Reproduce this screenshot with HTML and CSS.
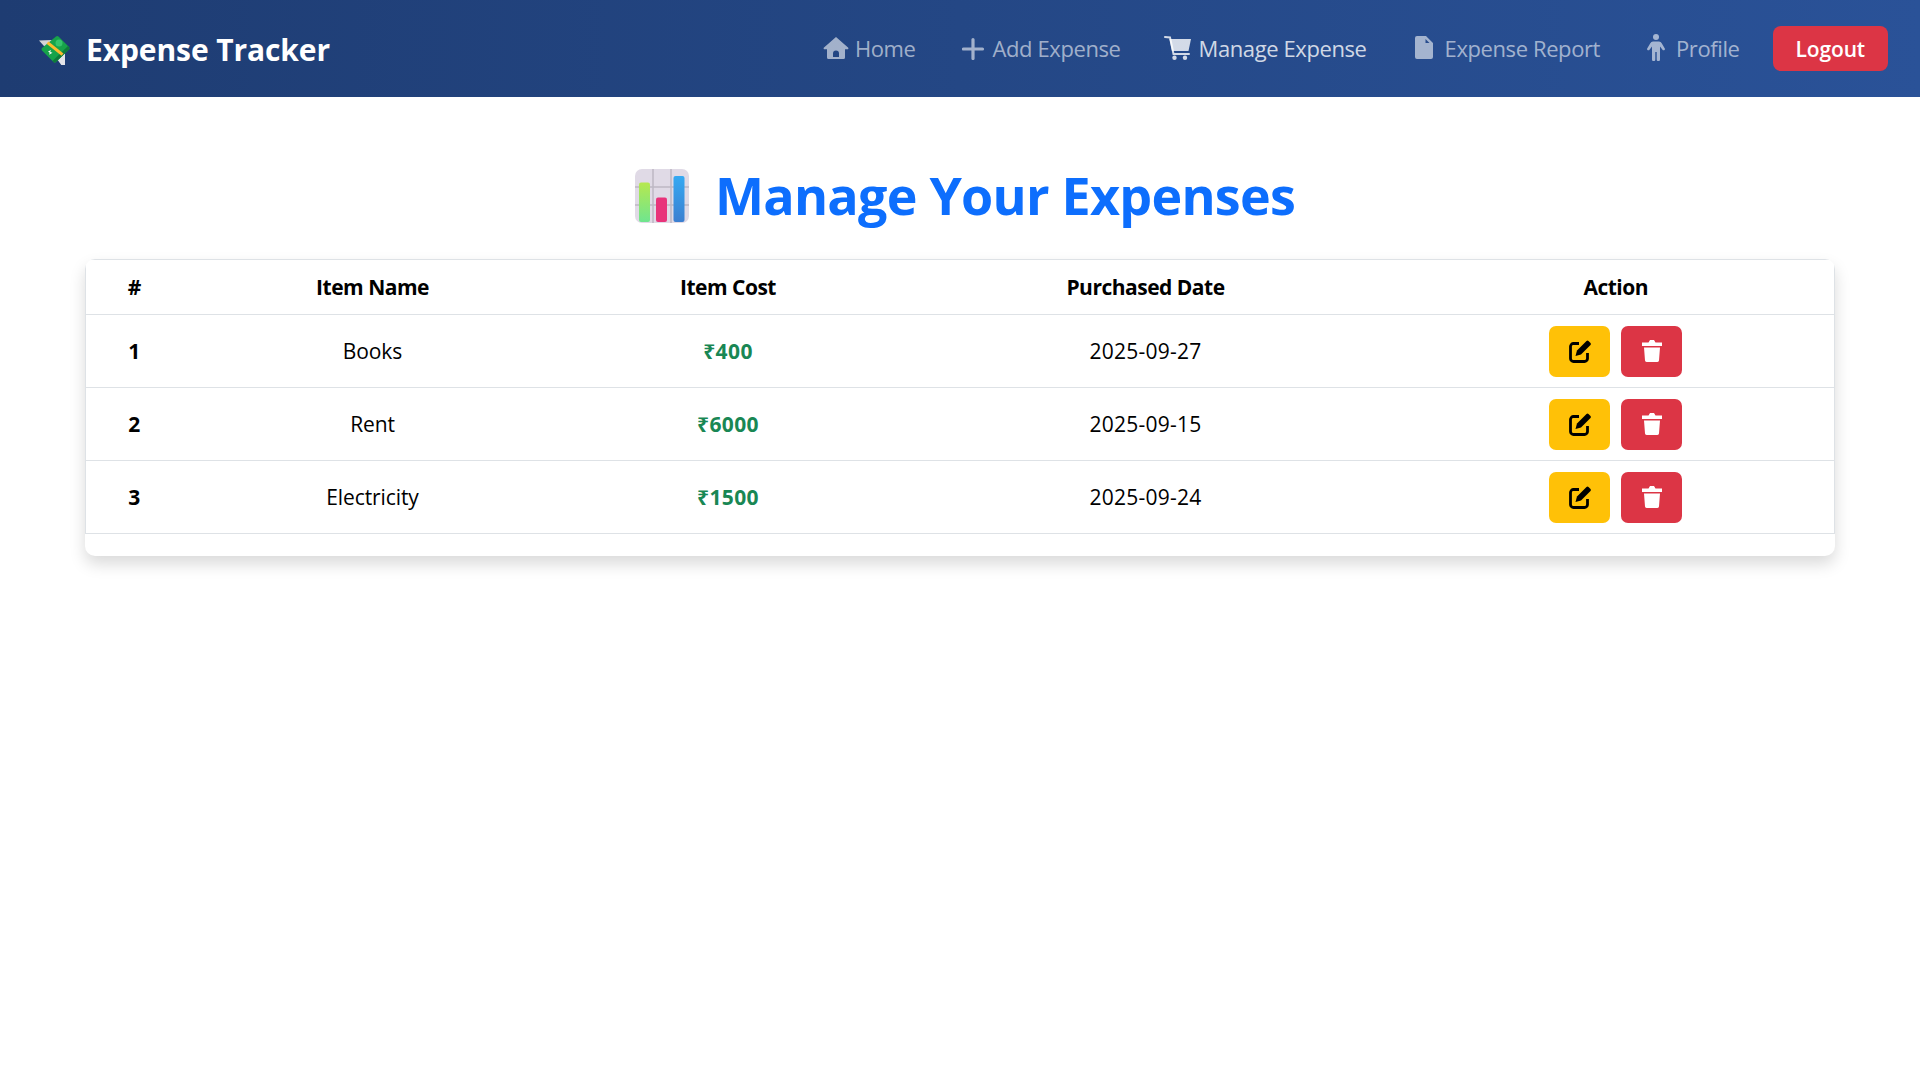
FILE: index.html
```html
<!DOCTYPE html>
<html lang="en">
<head>
  <meta charset="UTF-8">
  <title>Manage Expense</title>
  <link rel="stylesheet" href="styles.css">
</head>
<body>
  <nav class="navbar">
    <a class="brand" href="#">
      <svg class="brand-icon" viewBox="38 32 32 32">
        <path d="M39 39.500l13-.5-4 8-4-2z" fill="#d4d4d8"/>
        <path d="M65 52v14l-3-1-5-7z" fill="#e4e4e8"/>
        <path d="M56 35.500a2 2 0 0 1 2.500 0L69 46a2 2 0 0 1 0 2.500L56 61a2 2 0 0 1-2.500 0L42 49.500a2 2 0 0 1 0-2.500z" fill="#17a34a"/>
        <path d="M69 46a2 2 0 0 1 0 2.500L56 61a2 2 0 0 1-2.500 0l-1-1 L68 45z" fill="#0f7a3a"/>
        <path d="M48.500 40.500l15 12-2 2.300-15-12z" fill="#fdbb2d"/>
        <circle cx="59" cy="42" r="3.500" fill="#35c46c"/>
        <path d="M48 50.500l3-1.500-.8 2 2.300.8-3.500 2 .8-2z" fill="#fff"/>
      </svg>
      Expense Tracker
    </a>
    <ul class="nav-links">
      <li><a href="#">
        <svg class="icon i-home" viewBox="0 0 26 24"><path fill-rule="evenodd" d="M13 1L25 11.500a1 1 0 0 1-.7 1.800H22v8.200a1.500 1.500 0 0 1-1.500 1.500h-15A1.500 1.500 0 0 1 4 21.500v-8.200H1.700a1 1 0 0 1-.7-1.800zM10 21h6v-3.500a3 3 0 0 0-6 0z"/></svg>
        Home</a></li>
      <li class="nav-add"><a href="#">
        <svg class="icon i-plus" viewBox="0 0 25 24"><path d="M11 3.500v19M1.500 13h19" fill="none" stroke="currentColor" stroke-width="3.200" stroke-linecap="round"/></svg>
        Add Expense</a></li>
      <li class="nav-cart"><a class="active" href="#">
        <svg class="icon i-cart" viewBox="0 0 29 24">
          <path d="M1 1l5 .5 3.500 16.500H25" fill="none" stroke="currentColor" stroke-width="2" stroke-linecap="round"/>
          <path d="M5.500 3H27l-2.500 12H8z"/>
          <circle cx="10.500" cy="21.700" r="2.200"/>
          <circle cx="21" cy="21.700" r="2.200"/>
        </svg>
        Manage Expense</a></li>
      <li><a href="#">
        <svg class="icon i-file" viewBox="0 0 24 23"><path fill-rule="evenodd" d="M2 0h9l7 7v14a2 2 0 0 1-2 2H2a2 2 0 0 1-2-2V2a2 2 0 0 1 2-2zm8.500 3v4h4z"/></svg>
        Expense Report</a></li>
      <li class="nav-profile"><a href="#">
        <svg class="icon i-person" viewBox="0 0 23 27">
          <circle cx="9" cy="3" r="3"/>
          <path d="M6 7.500h6a3 3 0 0 1 2.700 1.700l3.100 5.300a1.300 1.300 0 0 1-2.300 1.200L13 12.500v13a1.500 1.500 0 0 1-3.300 0V18H8.300v7.500a1.500 1.500 0 0 1-3.300 0v-13l-2.500 3.200a1.300 1.300 0 0 1-2.300-1.200l3.100-5.300A3 3 0 0 1 6 7.500z"/>
        </svg>
        Profile</a></li>
      <li class="nav-logout"><a class="logout" href="#">Logout</a></li>
    </ul>
  </nav>

  <main class="content">
    <h1 class="page-title">
      <svg class="title-icon" viewBox="0 0 54 54">
        <defs>
          <linearGradient id="g1" x1="0" y1="0" x2="0" y2="1"><stop offset="0" stop-color="#b6e84f"/><stop offset="1" stop-color="#6fe58f"/></linearGradient>
          <linearGradient id="b1" x1="0" y1="0" x2="0" y2="1"><stop offset="0" stop-color="#35a9f2"/><stop offset="1" stop-color="#3c7fd0"/></linearGradient>
        </defs>
        <rect width="54" height="54" rx="7" fill="#e0dae6"/>
        <path d="M18 0v54M36 0v54M0 18h54M0 36h54" stroke="#bdb8c4" stroke-width="1.500"/>
        <rect x="4" y="13.500" width="11" height="39.500" rx="2" fill="url(#g1)"/>
        <rect x="21" y="28.500" width="11" height="24.500" rx="2" fill="#e8337a"/>
        <rect x="38.500" y="7" width="11" height="46" rx="2" fill="url(#b1)"/>
      </svg>
      Manage Your Expenses
    </h1>

    <div class="table-card">
      <table class="expense-table">
        <colgroup>
          <col class="col-num"><col class="col-name"><col class="col-cost"><col class="col-date"><col class="col-action">
        </colgroup>
        <thead>
          <tr><th>#</th><th>Item Name</th><th>Item Cost</th><th>Purchased Date</th><th>Action</th></tr>
        </thead>
        <tbody>
          <tr>
            <td class="num">1</td><td>Books</td><td class="cost">₹400</td><td class="date">2025-09-27</td>
            <td><div class="actions">
              <button class="btn edit"><svg viewBox="0 0 24 24"><use href="#edit-icon"/></svg></button>
              <button class="btn del"><svg viewBox="0 0 24 24"><use href="#trash-icon"/></svg></button>
            </div></td>
          </tr>
          <tr>
            <td class="num">2</td><td>Rent</td><td class="cost">₹6000</td><td class="date">2025-09-15</td>
            <td><div class="actions">
              <button class="btn edit"><svg viewBox="0 0 24 24"><use href="#edit-icon"/></svg></button>
              <button class="btn del"><svg viewBox="0 0 24 24"><use href="#trash-icon"/></svg></button>
            </div></td>
          </tr>
          <tr>
            <td class="num">3</td><td>Electricity</td><td class="cost">₹1500</td><td class="date">2025-09-24</td>
            <td><div class="actions">
              <button class="btn edit"><svg viewBox="0 0 24 24"><use href="#edit-icon"/></svg></button>
              <button class="btn del"><svg viewBox="0 0 24 24"><use href="#trash-icon"/></svg></button>
            </div></td>
          </tr>
        </tbody>
      </table>
    </div>
  </main>

  <svg class="sprites" aria-hidden="true">
    <symbol id="edit-icon" viewBox="0 0 24 24">
      <path d="M11 4.500H5.500a3 3 0 0 0-3 3v12a3 3 0 0 0 3 3h11a3 3 0 0 0 3-3V14" fill="none" stroke="currentColor" stroke-width="2.800"/>
      <path d="M9 11.500L18.500 2a1.500 1.500 0 0 1 2 0l2 2a1.500 1.500 0 0 1 0 2L13 15.500l-5.500 1.500z"/>
    </symbol>
    <symbol id="trash-icon" viewBox="0 0 24 24">
      <path d="M2 3.500h6.500L10 1h4l1.500 2.500H22V7H2z"/>
      <path d="M4 8.500h16l-1 13a2 2 0 0 1-2 1.500H7a2 2 0 0 1-2-1.500z"/>
    </symbol>
  </svg>
</body>
</html>
```

FILE: styles.css
```css
html, body {
  margin: 0;
  padding: 0;
}

body {
  min-height: 100vh;
  background: #fff;
  color: #000;
  font-family: "Open Sans", "Noto Sans", "Liberation Sans", sans-serif;
  font-size: 16px;
}

a {
  text-decoration: none;
}

/* navbar */
.navbar {
  height: 97px;
  box-sizing: border-box;
  padding: 0 32px 0 38px;
  display: flex;
  align-items: center;
  justify-content: space-between;
  background: linear-gradient(90deg, #1e3c72, #2a5298);
}

.brand {
  display: flex;
  align-items: center;
  gap: 16px;
  padding-top: 2px;
  color: #fff;
  font-size: 30px;
  font-weight: 700;
  letter-spacing: -.1px;
}

.brand-icon {
  width: 32px;
  height: 32px;
  margin-top: -2px;
}

.nav-links {
  display: flex;
  align-items: center;
  list-style: none;
  margin: 0;
  padding: 0 0 2px;
  gap: 33px;
}

.nav-links li {
  padding-left: 15px;
}

.nav-links li.nav-add {
  padding-left: 13px;
}

.nav-links li.nav-cart {
  padding-left: 10px;
}

.nav-links li.nav-profile {
  padding-left: 14px;
}

.nav-links li.nav-logout {
  padding-left: 0;
  margin-top: 2px;
}

.nav-links a {
  display: flex;
  align-items: center;
  gap: 6px;
  color: rgba(255, 255, 255, .58);
  font-size: 22px;
  letter-spacing: -.4px;
}

.nav-links a.active {
  color: rgba(255, 255, 255, .8);
}

.icon {
  height: 24px;
  fill: currentColor;
}

.i-home { width: 26px; }
.i-plus { width: 25px; }
.i-cart { width: 29px; }
.i-file { width: 24px; height: 23px; }
.i-person { width: 23px; height: 27px; }

.nav-links a.logout {
  background: #dc3545;
  color: #fff;
  font-weight: 600;
  font-size: 21px;
  letter-spacing: -.15px;
  padding: 0 23px;
  height: 45px;
  border-radius: 8px;
}

/* content */
.content {
  padding: 64px 85px 60px;
}

.page-title {
  display: flex;
  align-items: center;
  justify-content: center;
  gap: 26px;
  margin: 0 0 30px;
  padding-left: 10px;
  color: #0d6efd;
  font-size: 52px;
  font-weight: 700;
  letter-spacing: -.75px;
  line-height: 68px;
}

.title-icon {
  width: 54px;
  height: 54px;
  margin-top: 2px;
}

.table-card {
  border-radius: 10px;
  padding-bottom: 22px;
  box-shadow: 0 8px 16px rgba(0, 0, 0, .15);
  overflow: hidden;
}

.expense-table {
  width: 100%;
  border-collapse: collapse;
  border: 1px solid #dee2e6;
  border-bottom: 0;
  table-layout: fixed;
  font-size: 21px;
  letter-spacing: -.1px;
}

.col-num { width: 97px; }
.col-name { width: 380px; }
.col-cost { width: 331px; }
.col-date { width: 504px; }

.expense-table th,
.expense-table td {
  text-align: center;
  border-bottom: 1px solid #dee2e6;
  padding: 0;
}

.expense-table th {
  height: 54px;
  font-weight: 700;
  letter-spacing: -.5px;
}

.expense-table td {
  height: 72px;
}

.num {
  font-weight: 700;
}

.cost {
  color: #198754;
  font-weight: 700;
  letter-spacing: .4px;
}

.date {
  letter-spacing: .25px;
}

.actions {
  display: flex;
  justify-content: center;
  gap: 11px;
}

.btn {
  width: 61px;
  height: 51px;
  border: 0;
  border-radius: 7px;
  padding: 0;
  display: flex;
  align-items: center;
  justify-content: center;
}

.btn svg {
  width: 24px;
  height: 24px;
  fill: currentColor;
}

.edit {
  background: #ffc107;
  color: #000;
}

.del {
  background: #dc3545;
  color: #fff;
}

.sprites {
  display: none;
}
```
